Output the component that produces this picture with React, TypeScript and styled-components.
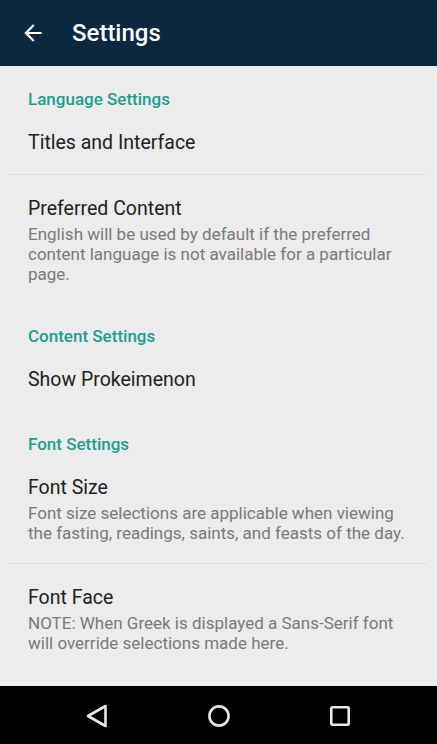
import React from "react";
import styled, { createGlobalStyle } from "styled-components";

const GlobalStyle = createGlobalStyle`
  html, body {
    margin: 0;
    padding: 0;
    background: #ececec;
  }
  body {
    font-family: Roboto, "Noto Sans", "Liberation Sans", sans-serif;
    -webkit-font-smoothing: antialiased;
  }
  * { box-sizing: border-box; }
`;

const Screen = styled.div`
  width: 437px;
  height: 744px;
  display: flex;
  flex-direction: column;
  background: #ececec;
  overflow: hidden;
`;

const AppBar = styled.header`
  height: 66px;
  flex: none;
  background: #0c2740;
  display: flex;
  align-items: center;
  padding-left: 20px;
  gap: 26px;
`;

const BackButton = styled.button`
  width: 26px;
  height: 26px;
  padding: 0;
  border: none;
  background: none;
  display: flex;
  align-items: center;
  justify-content: center;
  color: #ffffff;
`;

const AppTitle = styled.h1`
  margin: 0;
  font-size: 24px;
  font-weight: 500;
  color: #ffffff;
  line-height: 28px;
`;

const List = styled.main`
  flex: 1;
  display: flex;
  flex-direction: column;
`;

const Category = styled.div`
  padding: 22.5px 28px 0;
  font-size: 17px;
  line-height: 20px;
  font-weight: 500;
  color: #1c9e8e;
`;

const Item = styled.div`
  padding: 22px 28px 19.5px;
  display: flex;
  flex-direction: column;
`;

const ItemTitle = styled.div`
  font-size: 19.5px;
  line-height: 24px;
  color: #212121;
`;

const ItemSummary = styled.div`
  margin-top: 3px;
  font-size: 17px;
  line-height: 20px;
  color: #7a7a7a;
`;

const Divider = styled.hr`
  margin: 0 11px 0 8px;
  border: none;
  height: 1px;
  background: #d9d9d9;
  flex: none;
`;

const NavBar = styled.nav`
  height: 58px;
  flex: none;
  background: #000000;
  display: flex;
  justify-content: center;
  align-items: center;
`;

const NavButton = styled.div`
  width: 121.5px;
  height: 58px;
  display: flex;
  align-items: center;
  justify-content: center;
  padding-top: 1px;
`;

const ArrowBack = () => (
  <svg width="26" height="26" viewBox="0 0 24 24" fill="currentColor">
    <path d="M20 11H7.83l5.59-5.59L12 4l-8 8 8 8 1.41-1.41L7.83 13H20v-2z" />
  </svg>
);

const BackTri = () => (
  <svg width="24" height="26" viewBox="0 0 24 26">
    <path d="M20.5 3 L3 13 L20.5 23 Z" fill="none" stroke="#e6e6e6" strokeWidth="2.6" strokeLinejoin="round" />
  </svg>
);

const HomeCircle = () => (
  <svg width="26" height="26" viewBox="0 0 26 26">
    <circle cx="13" cy="13" r="9.6" fill="none" stroke="#e6e6e6" strokeWidth="2.6" />
  </svg>
);

const RecentSquare = () => (
  <svg width="24" height="24" viewBox="0 0 24 24">
    <rect x="3.3" y="3.3" width="17.4" height="17.4" rx="1" fill="none" stroke="#e6e6e6" strokeWidth="2.6" />
  </svg>
);

type Pref = { title: string; summary?: string };

const sections: { name: string; items: Pref[] }[] = [
  {
    name: "Language Settings",
    items: [
      { title: "Titles and Interface" },
      {
        title: "Preferred Content",
        summary:
          "English will be used by default if the preferred content language is not available for a particular page.",
      },
    ],
  },
  {
    name: "Content Settings",
    items: [{ title: "Show Prokeimenon" }],
  },
  {
    name: "Font Settings",
    items: [
      {
        title: "Font Size",
        summary:
          "Font size selections are applicable when viewing the fasting, readings, saints, and feasts of the day.",
      },
      {
        title: "Font Face",
        summary:
          "NOTE: When Greek is displayed a Sans-Serif font will override selections made here.",
      },
    ],
  },
];

export default function App() {
  return (
    <>
      <GlobalStyle />
      <Screen>
        <AppBar>
          <BackButton aria-label="Back">
            <ArrowBack />
          </BackButton>
          <AppTitle>Settings</AppTitle>
        </AppBar>
        <List>
          {sections.map((s) => (
            <React.Fragment key={s.name}>
              <Category>{s.name}</Category>
              {s.items.map((it, i) => (
                <React.Fragment key={it.title}>
                  {i > 0 && <Divider />}
                  <Item>
                    <ItemTitle>{it.title}</ItemTitle>
                    {it.summary && <ItemSummary>{it.summary}</ItemSummary>}
                  </Item>
                </React.Fragment>
              ))}
            </React.Fragment>
          ))}
        </List>
        <NavBar>
          <NavButton>
            <BackTri />
          </NavButton>
          <NavButton>
            <HomeCircle />
          </NavButton>
          <NavButton>
            <RecentSquare />
          </NavButton>
        </NavBar>
      </Screen>
    </>
  );
}
